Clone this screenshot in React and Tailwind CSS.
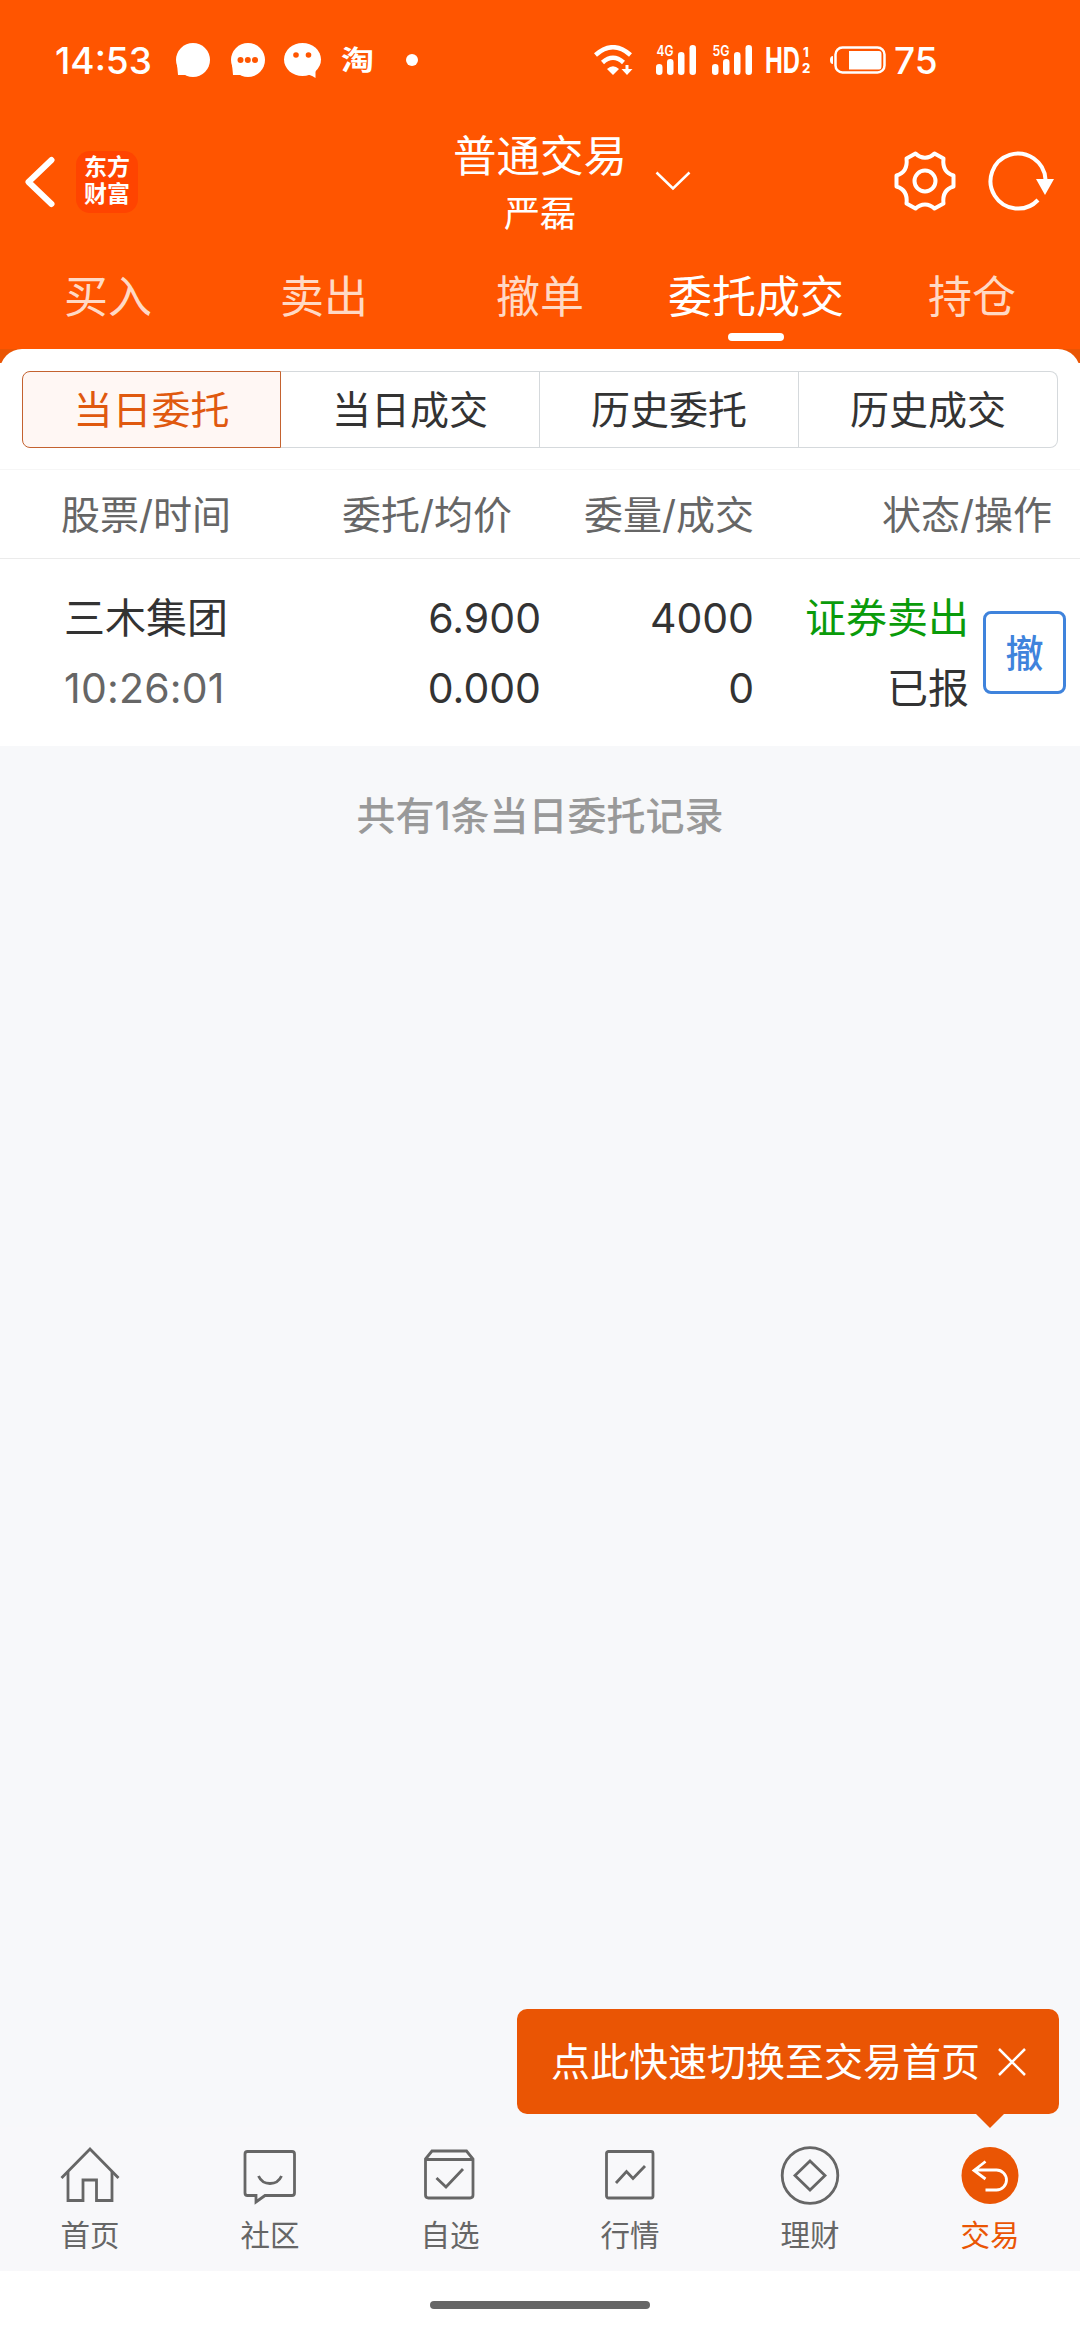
import React from "react";

const tabs = [
  { key: "buy", label: "买入" },
  { key: "sell", label: "卖出" },
  { key: "cancel", label: "撤单" },
  { key: "orders", label: "委托成交", active: true },
  { key: "holdings", label: "持仓" }
];

const segments = [
  { key: "todayOrders", label: "当日委托", className: "rounded-l-[8px] border border-[#c4622f] bg-[#fff7f4] text-[#e0590f]" },
  { key: "todayDeals", label: "当日成交", className: "border-y border-r border-[#d5d9dc] text-[#333]" },
  { key: "historyOrders", label: "历史委托", className: "border-y border-r border-[#d5d9dc] text-[#333]" },
  { key: "historyDeals", label: "历史成交", className: "rounded-r-[8px] border-y border-r border-[#d5d9dc] text-[#333]" }
];

const orders = [
  {
    name: "三木集团",
    time: "10:26:01",
    price: "6.900",
    average: "0.000",
    amount: "4000",
    filled: "0",
    side: "证券卖出",
    status: "已报"
  }
];

const navItems = [
  {
    key: "home",
    label: "首页",
    icon: (
      <>
        <path d="M1.500 33 L30 4 L58.500 33" />
        <path d="M8 27 V55.500 H23 V35 H36.500 V55.500 H52 V27" />
      </>
    )
  },
  {
    key: "community",
    label: "社区",
    icon: (
      <>
        <path d="M7.500 6.500 H52 Q54.500 6.500 54.500 9 V48 Q54.500 50.500 52 50.500 H25 L16 57 V50.500 H7.500 Q5 50.500 5 48 V9 Q5 6.500 7.500 6.500 Z" />
        <path d="M18.500 31 C23 41 37 41 41.500 31" />
      </>
    )
  },
  {
    key: "watchlist",
    label: "自选",
    icon: (
      <>
        <path d="M5.500 14 L12 6 H46.500 L53 14 V50 Q53 53 50 53 H8.500 Q5.500 53 5.500 50 Z M5.500 14.500 H53" />
        <path d="M16.500 33 L26 42 L43 24" />
      </>
    )
  },
  {
    key: "market",
    label: "行情",
    icon: (
      <>
        <rect x="6.500" y="6.500" width="46.500" height="46.500" rx="2" />
        <path d="M16 38 L26.500 26.500 L33 33.500 L45 21" />
      </>
    )
  },
  {
    key: "wealth",
    label: "理财",
    icon: (
      <>
        <circle cx="30" cy="30.500" r="27.800" />
        <path d="M30 16 L45 30.500 L30 45 L15 30.500 Z" />
      </>
    )
  },
  {
    key: "trade",
    label: "交易",
    active: true,
    icon: (
      <>
        <circle cx="30" cy="30.500" r="28.500" fill="#ea5504" stroke="none" />
        <path d="M25.500 16.500 L14 25.500 L25.500 34 M14 25 H36.500 A10 10 0 0 1 36.500 45 H25.500" stroke="#fff" />
      </>
    )
  }
];

function SignalBars({ label }) {
  return (
    <svg className="h-[30px] w-[42px] overflow-visible" viewBox="0 0 42 30" fill="#fff">
      <text x="0.500" y="11" fontSize="14.500" fontWeight="600" textLength="17" lengthAdjust="spacingAndGlyphs">{label}</text>
      <rect x="0" y="19" width="6.500" height="11" rx="3.200" />
      <rect x="11" y="14" width="6.500" height="16" rx="3.200" />
      <rect x="22" y="7" width="6.500" height="23" rx="3.200" />
      <rect x="33.500" y="0" width="6.500" height="30" rx="3.200" />
    </svg>
  );
}

function StatusBar() {
  return (
    <div className="flex h-[120px] items-center pl-[55px] text-white">
      <span className="w-[120px] text-[37px] font-medium leading-none">14:53</span>
      <svg className="h-[36px] w-[244px] overflow-visible" viewBox="0 0 244 36" fill="#fff">
        <circle cx="18" cy="18" r="17" />
        <path d="M2 22 L3 33 H16 Z" />
        <circle cx="73" cy="18" r="17" />
        <path d="M57 22 L58 33 H71 Z" />
        <circle cx="65.500" cy="18" r="3" fill="#ff5500" />
        <circle cx="72.800" cy="18" r="3" fill="#ff5500" />
        <circle cx="80" cy="18" r="3" fill="#ff5500" />
        <ellipse cx="127.500" cy="17.500" rx="18.500" ry="16.500" />
        <path d="M128 32 Q135 32 140.500 36 V27 Z" />
        <circle cx="121" cy="13" r="2.800" fill="#ff5500" />
        <circle cx="133.500" cy="13" r="2.800" fill="#ff5500" />
        <text x="166" y="27.500" fontSize="27" fontWeight="700" textLength="33" lengthAdjust="spacingAndGlyphs">淘</text>
        <circle cx="237" cy="18" r="6" />
      </svg>
      <svg className="ml-[175px] h-[31px] w-[40px]" viewBox="0 0 40 31" fill="none" stroke="#fff">
        <path d="M1.500 10 Q19 -5.500 36.500 10" strokeWidth="4.500" />
        <path d="M8.500 17.500 Q19 8 29.500 17.500" strokeWidth="4.500" />
        <path d="M13 24 Q19 18.500 25 24 L19 30 Z" fill="#fff" stroke="none" />
        <path d="M33 20 V26" strokeWidth="3" />
        <path d="M27.500 24 H38.500 L33 30 Z" fill="#fff" stroke="none" />
      </svg>
      <div className="ml-[22px] flex gap-[14px]">
        <SignalBars label="4G" />
        <SignalBars label="5G" />
      </div>
      <svg className="ml-[12px] h-[30px] w-[50px] overflow-visible" viewBox="0 0 50 30" fill="#fff">
        <text x="-1" y="27.500" fontSize="35" fontWeight="700" textLength="35" lengthAdjust="spacingAndGlyphs">HD</text>
        <text x="37" y="11.500" fontSize="13" fontWeight="800">1</text>
        <text x="36" y="27.500" fontSize="13" fontWeight="800">2</text>
      </svg>
      <svg className="ml-[14px] h-[28px] w-[56px]" viewBox="0 0 56 28" fill="none">
        <path d="M3 10 Q0 10 0 14 Q0 18 3 18 Z" fill="#fff" />
        <rect x="5.500" y="1.500" width="49" height="25" rx="7" stroke="#fff" strokeWidth="2.500" />
        <path d="M19 5 H49 Q51.500 5 51.500 8 V20 Q51.500 23.500 49 23.500 H19 Z" fill="#fff" />
      </svg>
      <span className="ml-[8px] text-[37px] font-medium leading-none">75</span>
    </div>
  );
}

function Header() {
  return (
    <header className="h-[349px] bg-[#ff5500] text-white">
      <StatusBar />
      <div className="grid h-[120px] grid-cols-[1fr_180px_1fr]">
        <div className="flex items-start pl-[24px] pt-[31px]">
          <svg className="mt-[5px] h-[52px] w-[32px]" viewBox="0 0 32 52" fill="none" stroke="#fff" strokeWidth="6" strokeLinecap="round" strokeLinejoin="round">
            <path d="M27.500 4 L4.500 26 L27.500 48" />
          </svg>
          <div className="ml-[20px] flex size-[62px] flex-col items-center justify-center rounded-[14px] bg-[#ff4400] pb-[2px] text-[23px] font-bold leading-[27px]">
            <span>东方</span>
            <span>财富</span>
          </div>
        </div>
        <div className="flex flex-col items-center pt-[14px]">
          <span className="whitespace-nowrap text-[43.500px] leading-[44px]">普通交易</span>
          <span className="mt-[18px] text-[36px] leading-[36px]">严磊</span>
        </div>
        <div className="flex items-start">
          <svg className="ml-[25px] mt-[50px] h-[22px] w-[36px]" viewBox="0 0 36 22" fill="none" stroke="#fff" strokeWidth="2.500">
            <path d="M1.500 2.500 L18 18.500 L34.500 2.500" />
          </svg>
          <svg className="ml-[204px] mt-[31px] size-[60px] overflow-visible" viewBox="-30 -30 60 60" fill="none" stroke="#fff" strokeWidth="4" strokeLinejoin="round">
            <path d="M28.500 -5.500 V5.500 C20 8 17.500 14 18.500 22.500 L9.500 27.500 C4 22 -4 22 -9.500 27.500 L-18.500 22.500 C-17.500 14 -20 8 -28.500 5.500 V-5.500 C-20 -8 -17.500 -14 -18.500 -22.500 L-9.500 -27.500 C-4 -22 4 -22 9.500 -27.500 L18.500 -22.500 C17.500 -14 20 -8 28.500 -5.500 Z" />
            <circle r="10.500" />
          </svg>
          <svg className="ml-[31px] mt-[31px] h-[62px] w-[68px]" viewBox="-1 0 68 62" fill="none" stroke="#fff" strokeWidth="4">
            <path d="M58.500 28.500 A27.500 27.500 0 1 0 51 49" />
            <path d="M49 28 H67 L58 44 Z" fill="#fff" stroke="none" />
          </svg>
        </div>
      </div>
      <nav className="grid grid-cols-5">
        {tabs.map(tab => (
          <button key={tab.key} className="flex h-[109px] flex-col items-center pt-[35px]">
            <span className={"text-[44px] leading-[44px] " + (tab.active ? "text-white" : "text-[#ffd9c5]")}>
              {tab.label}
            </span>
            {tab.active && <span className="mt-[14px] h-[8px] w-[56px] rounded-full bg-white" />}
          </button>
        ))}
      </nav>
    </header>
  );
}

function OrderRow({ order }) {
  return (
    <div className="flex h-[187px] bg-white pt-[34px] text-[41px] leading-[50px] text-[#333]">
      <div className="flex w-[262px] flex-col gap-[20px] pl-[64px]">
        <span>{order.name}</span>
        <span className="tracking-[0.2px] text-[#666]">{order.time}</span>
      </div>
      <div className="flex w-[279px] flex-col gap-[20px] text-right">
        <span>{order.price}</span>
        <span>{order.average}</span>
      </div>
      <div className="flex w-[213px] flex-col gap-[20px] text-right">
        <span>{order.amount}</span>
        <span>{order.filled}</span>
      </div>
      <div className="flex w-[215px] flex-col gap-[20px] text-right">
        <span className="text-[#0a9b0a]">{order.side}</span>
        <span>{order.status}</span>
      </div>
      <button className="ml-[14px] mt-[18px] flex size-[83px] items-center justify-center rounded-[8px] border-[3px] border-[#3f83dc] text-[38px] font-medium leading-none text-[#3f83dc]">
        撤
      </button>
    </div>
  );
}

function BottomNav() {
  return (
    <nav className="relative grid h-[144px] grid-cols-6 bg-[#f8f8fa]">
      <div className="absolute bottom-[157px] left-[517px] flex h-[105px] w-[542px] items-center rounded-[10px] bg-[#ea5504] pl-[34px] text-white">
        <span className="whitespace-nowrap text-[39px] leading-none">点此快速切换至交易首页</span>
        <svg className="ml-[17px] size-[30px]" viewBox="0 0 30 30" fill="none" stroke="#fff" strokeWidth="2.500">
          <path d="M2 2 L28 28 M28 2 L2 28" />
        </svg>
        <svg className="absolute left-[458px] top-[104px] h-[15px] w-[30px]" viewBox="0 0 30 15" fill="#ea5504">
          <path d="M0 0 H30 L15 15 Z" />
        </svg>
      </div>
      {navItems.map(item => (
        <button
          key={item.key}
          className={"flex flex-col items-center pt-[18px] " + (item.active ? "text-[#ea5504]" : "text-[#666]")}
        >
          <svg className="size-[60px]" viewBox="0 0 60 60" fill="none" stroke="currentColor" strokeWidth="2.800">
            {item.icon}
          </svg>
          <span className="mt-[15px] text-[29.500px] leading-[30px]">{item.label}</span>
        </button>
      ))}
    </nav>
  );
}

export default function App() {
  return (
    <div className="flex h-[2340px] w-[1080px] flex-col overflow-hidden bg-[#f7f8fa] font-['Inter','Noto_Sans_CJK_SC',sans-serif]">
      <Header />
      <div className="h-[14px] overflow-hidden bg-[#ea5504]">
        <div className="h-[28px] rounded-t-[22px] bg-white" />
      </div>
      <div className="h-[107px] border-b border-[#f6f6f6] bg-white px-[22px] pt-[8px]">
        <div className="grid h-[77px] grid-cols-4">
          {segments.map(segment => (
            <button key={segment.key} className={"text-[39px] leading-none " + segment.className}>
              {segment.label}
            </button>
          ))}
        </div>
      </div>
      <div className="flex h-[89px] items-center border-b border-[#ebebeb] bg-white text-[39px] leading-none text-[#666]">
        <span className="w-[262px] pl-[61px]">股票/时间</span>
        <span className="w-[250px] text-right">委托/均价</span>
        <span className="w-[242px] text-right">委量/成交</span>
        <span className="w-[298px] text-right">状态/操作</span>
      </div>
      {orders.map(order => (
        <OrderRow key={order.time} order={order} />
      ))}
      <p className="flex-1 pt-[46px] text-center text-[39px] font-medium leading-[48px] text-[#999]">
        共有{orders.length}条当日委托记录
      </p>
      <BottomNav />
      <div className="flex h-[69px] justify-center bg-white pt-[30px]">
        <div className="h-[8px] w-[220px] rounded-full bg-[#666]" />
      </div>
    </div>
  );
}
